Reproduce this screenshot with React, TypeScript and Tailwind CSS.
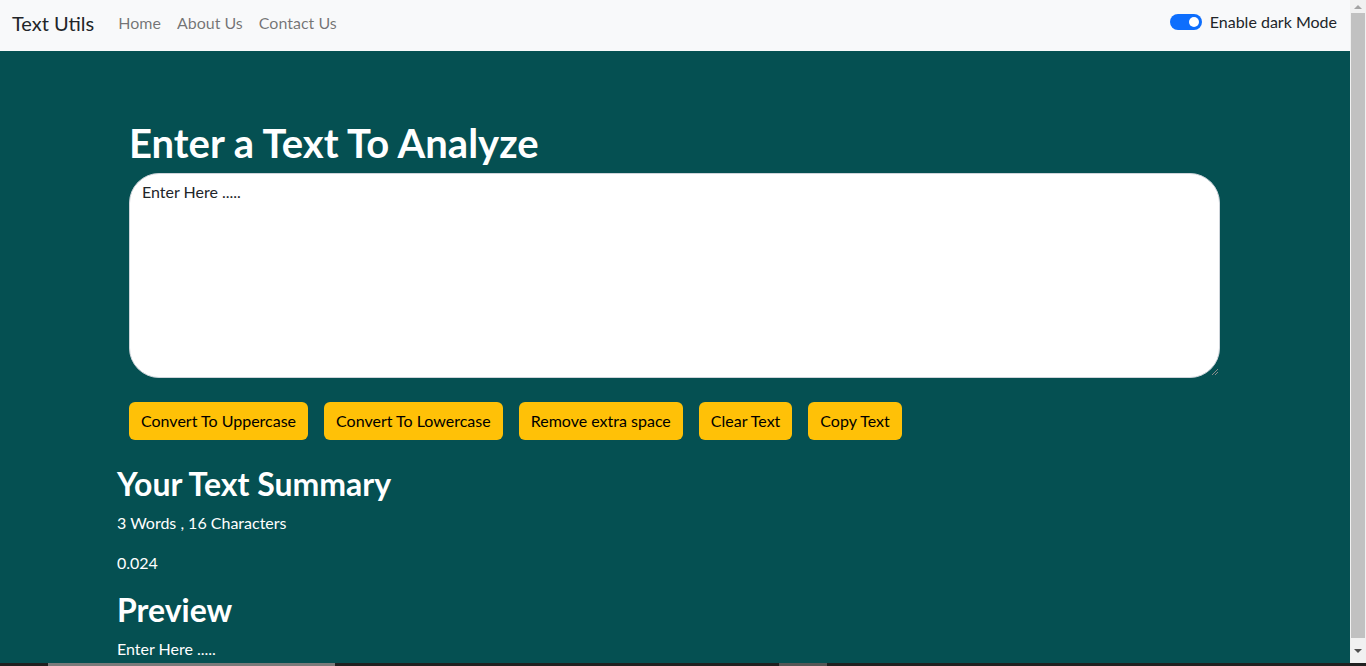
import React from "react";

const font = { fontFamily: '"Segoe UI", Lato, "Noto Sans", sans-serif' };

const actions = [
  "Convert To Uppercase",
  "Convert To Lowercase",
  "Remove extra space",
  "Clear Text",
  "Copy Text",
];

function Navbar() {
  return (
    <nav className="h-[51px] bg-[#f8f9fa] flex items-center px-3 pb-[5px]">
      <a className="text-[20px] text-[#212529] mr-4 leading-[30px]">Text Utils</a>
      <ul className="flex items-center">
        {["Home", "About Us", "Contact Us"].map((l) => (
          <li key={l} className="px-2 text-[16px] text-black/55">
            {l}
          </li>
        ))}
      </ul>
      <div className="ml-auto flex items-center pr-px pb-[2px]">
        <span className="w-8 h-4 rounded-full bg-[#0d6efd] flex items-center justify-end px-[3px]">
          <span className="w-[10px] h-[10px] rounded-full bg-white" />
        </span>
        <label className="ml-2 text-[16px] text-[#212529]">Enable dark Mode</label>
      </div>
    </nav>
  );
}

function Scrollbar() {
  return (
    <div className="w-4 bg-[#f1f1f1] flex flex-col items-center">
      <div className="h-[13px] flex items-center justify-center">
        <span className="w-0 h-0 border-x-[4px] border-x-transparent border-b-[4px] border-b-[#a3a3a3]" />
      </div>
      <div className="w-[14px] h-[625px] bg-[#c1c1c1]" />
      <div className="flex-1 flex items-center justify-center">
        <span className="w-0 h-0 border-x-[4px] border-x-transparent border-t-[4px] border-t-[#505050]" />
      </div>
    </div>
  );
}

export default function App() {
  return (
    <div className="w-[1366px] h-[666px] flex flex-col overflow-hidden" style={font}>
      <div className="flex flex-1 min-h-0">
        <div className="flex-1 flex flex-col bg-[#055052] overflow-hidden">
          <Navbar />
          <main className="w-[1140px] mx-auto px-3 text-white">
            <div className="px-3 pt-[68px]">
              <h1 className="text-[40px] font-bold leading-[48px] mb-[6px]">Enter a Text To Analyze</h1>
              <div className="relative">
                <textarea
                  rows={8}
                  defaultValue="Enter Here ....."
                  className="block w-[1091px] h-[205px] resize-none bg-white text-[#212529] text-[16px] leading-6 px-3 py-[6px] border border-[#ced4da] rounded-[30px] outline-none"
                />
                <svg className="absolute left-[1082px] bottom-[2px]" width="8" height="8" viewBox="0 0 8 8">
                  <path d="M7 1 L1 7 M7 4 L4 7" stroke="#8a8a8a" strokeWidth="1" />
                </svg>
              </div>
              <div className="flex gap-4 mt-6">
                {actions.map((a) => (
                  <button
                    key={a}
                    className="h-[38px] px-3 rounded-[6px] bg-[#ffc107] text-black text-[16px]"
                  >
                    {a}
                  </button>
                ))}
              </div>
            </div>
            <h2 className="text-[32px] font-bold leading-[38px] mt-[25px] mb-2">Your Text Summary</h2>
            <p className="text-[16px] leading-6 mb-4">3 Words , 16 Characters</p>
            <p className="text-[16px] leading-6 mb-4">0.024</p>
            <h2 className="text-[32px] font-bold leading-[38px] mb-2">Preview</h2>
            <p className="text-[16px] leading-6">Enter Here .....</p>
          </main>
        </div>
        <Scrollbar />
      </div>
      <div className="h-[3px] bg-[#202020] flex">
        <div className="ml-[48px] w-[287px] bg-[#7a7a7a]" />
        <div className="ml-[444px] w-[48px] bg-[#555555]" />
      </div>
    </div>
  );
}
